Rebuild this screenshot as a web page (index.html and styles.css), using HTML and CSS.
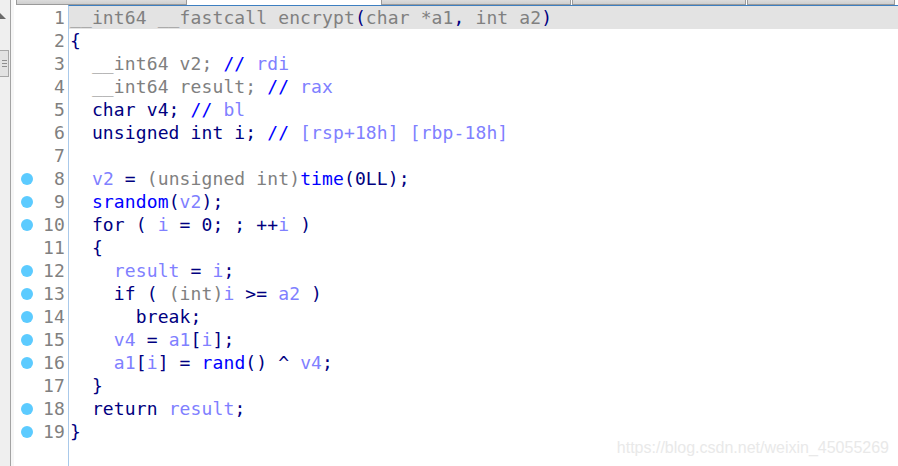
FILE: index.html
```html
<!DOCTYPE html>
<html>
<head>
<meta charset="utf-8">
<link rel="stylesheet" href="styles.css">
</head>
<body>
<div class="window">
  <div class="sidebar">
    <svg class="arrow" width="6" height="8" viewBox="0 0 6 8"><polygon points="0,7 6,7 0,1" fill="#6a6a6a"/></svg>
    <div class="thumb"><span></span><span></span><span></span></div>
  </div>
  <div class="main">
    <div class="topbar">
      <div class="seg seg1"></div>
      <div class="seg seg2"></div>
      <div class="seg seg3"></div>
      <div class="seg seg4"></div>
    </div>
    <div class="view">
      <div class="gutter">
        <div class="num">1</div>
        <div class="num">2</div>
        <div class="num">3</div>
        <div class="num">4</div>
        <div class="num">5</div>
        <div class="num">6</div>
        <div class="num">7</div>
        <div class="num bp">8</div>
        <div class="num bp">9</div>
        <div class="num bp">10</div>
        <div class="num">11</div>
        <div class="num bp">12</div>
        <div class="num bp">13</div>
        <div class="num bp">14</div>
        <div class="num bp">15</div>
        <div class="num bp">16</div>
        <div class="num">17</div>
        <div class="num bp">18</div>
        <div class="num bp">19</div>
      </div>
      <div class="code">
        <div class="ln cur"><span class="g">__int64 __fastcall encrypt</span><span class="n">(</span><span class="g">char *a1</span><span class="n">,</span><span class="g"> int a2</span><span class="n">)</span></div>
        <div class="ln"><span class="n">{</span></div>
        <div class="ln"><span class="g">  __int64 v2; </span><span class="b">// </span><span class="v">rdi</span></div>
        <div class="ln"><span class="g">  __int64 result; </span><span class="b">// </span><span class="v">rax</span></div>
        <div class="ln"><span class="n">  char v4; </span><span class="b">// </span><span class="v">bl</span></div>
        <div class="ln"><span class="n">  unsigned int i; </span><span class="b">// </span><span class="v">[rsp+18h] [rbp-18h]</span></div>
        <div class="ln"> </div>
        <div class="ln"><span class="n">  </span><span class="v">v2</span><span class="n"> = </span><span class="g">(unsigned int)</span><span class="b">time</span><span class="n">(0LL);</span></div>
        <div class="ln"><span class="n">  </span><span class="b">srandom</span><span class="n">(</span><span class="v">v2</span><span class="n">);</span></div>
        <div class="ln"><span class="n">  for ( </span><span class="v">i</span><span class="n"> = 0; ; ++</span><span class="v">i</span><span class="n"> )</span></div>
        <div class="ln"><span class="n">  {</span></div>
        <div class="ln"><span class="n">    </span><span class="v">result</span><span class="n"> = </span><span class="v">i</span><span class="n">;</span></div>
        <div class="ln"><span class="n">    if ( </span><span class="g">(int)</span><span class="v">i</span><span class="n"> &gt;= </span><span class="v">a2</span><span class="n"> )</span></div>
        <div class="ln"><span class="n">      break;</span></div>
        <div class="ln"><span class="n">    </span><span class="v">v4</span><span class="n"> = </span><span class="v">a1</span><span class="n">[</span><span class="v">i</span><span class="n">];</span></div>
        <div class="ln"><span class="n">    </span><span class="v">a1</span><span class="n">[</span><span class="v">i</span><span class="n">] = </span><span class="b">rand</span><span class="n">() ^ </span><span class="v">v4</span><span class="n">;</span></div>
        <div class="ln"><span class="n">  }</span></div>
        <div class="ln"><span class="n">  return </span><span class="v">result</span><span class="n">;</span></div>
        <div class="ln"><span class="n">}</span></div>
      </div>
    </div>
    <div class="watermark">https://blog.csdn.net/weixin_45055269</div>
  </div>
</div>
</body>
</html>
```

FILE: styles.css
```css
html, body {
  margin: 0;
  padding: 0;
  background: #ffffff;
}

.window {
  display: flex;
  width: 898px;
  height: 466px;
  overflow: hidden;
}

.sidebar {
  position: relative;
  width: 10px;
  flex: none;
  background: #efefef;
  border-right: 1px solid #a3a3a3;
  box-shadow: 3px 0 0 #f6f6f6;
}

.arrow {
  position: absolute;
  left: 0;
  top: 12px;
}

.thumb {
  position: absolute;
  left: -1px;
  top: 50px;
  width: 8px;
  height: 25px;
  background: #e2e2e2;
  border: 1px solid #a6a6a6;
  display: flex;
  flex-direction: column;
  justify-content: center;
  gap: 2px;
  align-items: center;
}

.thumb span {
  display: block;
  width: 5px;
  height: 1px;
  background: #8e8e8e;
}

.main {
  position: relative;
  flex: 1;
  margin-left: 3px;
  display: flex;
  flex-direction: column;
}

.topbar {
  height: 5px;
  display: flex;
  flex: none;
}

.seg {
  height: 4px;
  background: linear-gradient(#dcdcdc, #cfcfcf);
  border: 1px solid #9a9a9a;
  border-top: none;
}

.seg1 { margin-left: 2px; width: 169px; }
.seg2 { margin-left: 194px; width: 188px; }
.seg3 { margin-left: 1px; width: 172px; }
.seg4 { margin-left: 1px; width: 146px; }

.view {
  display: flex;
  flex: 1;
  font-family: "DejaVu Sans Mono", "Liberation Mono", monospace;
  font-size: 18px;
  letter-spacing: 0.12px;
  line-height: 23px;
}

.gutter {
  width: 54px;
  flex: none;
  padding-top: 1px;
}

.num {
  position: relative;
  height: 23px;
  text-align: right;
  padding-right: 3px;
  color: #808080;
  white-space: pre;
}

.num.bp::before {
  content: "";
  position: absolute;
  left: 7px;
  top: 6px;
  width: 12px;
  height: 12px;
  border-radius: 50%;
  background: #5ccbff;
}

.code {
  flex: 1;
  border-left: 1px solid #a9c9ea;
  border-top: 1px solid #3d7fc1;
}

.ln {
  height: 23px;
  padding-left: 1px;
  white-space: pre;
  color: #000080;
}

.ln.cur {
  background: #e3e3e3;
}

.g { color: #808080; }
.n { color: #000080; }
.b { color: #0000ff; }
.v { color: #8080ff; }

.watermark {
  position: absolute;
  right: 9px;
  bottom: 9px;
  font-family: "Liberation Sans", Arial, sans-serif;
  font-size: 16px;
  color: #e9e9e9;
  white-space: nowrap;
}
```
